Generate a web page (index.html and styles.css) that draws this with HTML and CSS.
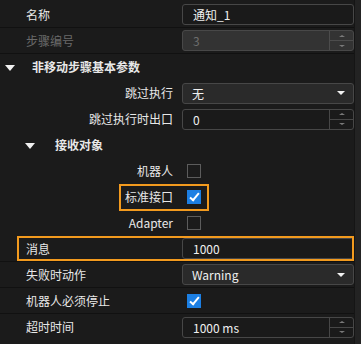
FILE: index.html
```html
<!DOCTYPE html>
<html lang="zh">
<head>
  <meta charset="UTF-8">
  <title>步骤属性</title>
  <link rel="stylesheet" href="styles.css">
</head>
<body>

<div class="panel">
  <div class="rows">

    <div class="row divided">
      <span class="label">名称</span>
      <div class="input">通知_1</div>
    </div>

    <div class="row divided">
      <span class="label disabled">步骤编号</span>
      <div class="spin disabled-box">
        <span class="value">3</span>
        <span class="spin-btns"><i class="up"></i><i class="down"></i></span>
      </div>
    </div>

    <div class="row section">
      <span class="caret"></span>
      <span class="title">非移动步骤基本参数</span>
    </div>

    <div class="row">
      <span class="label right">跳过执行</span>
      <div class="combo"><span class="value">无</span><i class="arrow"></i></div>
    </div>

    <div class="row">
      <span class="label right">跳过执行时出口</span>
      <div class="spin">
        <span class="value">0</span>
        <span class="spin-btns"><i class="up"></i><i class="down"></i></span>
      </div>
    </div>

    <div class="row section sub">
      <span class="caret"></span>
      <span class="title">接收对象</span>
    </div>

    <div class="row">
      <span class="label right">机器人</span>
      <div class="check-cell"><span class="checkbox"></span></div>
    </div>

    <div class="row">
      <span class="label right">标准接口</span>
      <div class="check-cell"><span class="checkbox checked"></span></div>
      <span class="highlight hl-check"></span>
    </div>

    <div class="row">
      <span class="label right">Adapter</span>
      <div class="check-cell"><span class="checkbox"></span></div>
    </div>

    <div class="row divided">
      <span class="label">消息</span>
      <div class="input">1000</div>
      <span class="highlight hl-row"></span>
    </div>

    <div class="row divided">
      <span class="label">失败时动作</span>
      <div class="combo"><span class="value">Warning</span><i class="arrow"></i></div>
    </div>

    <div class="row divided">
      <span class="label">机器人必须停止</span>
      <div class="check-cell"><span class="checkbox checked"></span></div>
    </div>

    <div class="row">
      <span class="label">超时时间</span>
      <div class="spin">
        <span class="value">1000 ms</span>
        <span class="spin-btns"><i class="up"></i><i class="down"></i></span>
      </div>
    </div>

  </div>
  <div class="scrollbar"></div>
</div>

</body>
</html>
```

FILE: styles.css
```css
body {
  margin: 0;
  padding: 0;
  background-color: #1b1b1b;
  font-family: "Noto Sans CJK SC", "Noto Sans", sans-serif;
  font-size: 12px;
  color: #e8e8e8;
}

.panel {
  display: flex;
  width: 361px;
  height: 344px;
  overflow: hidden;
}

.rows {
  width: 355px;
  padding-top: 2px;
}

.scrollbar {
  width: 6px;
  background-color: #232323;
  border-left: 1px solid #151515;
}

.row {
  position: relative;
  display: grid;
  grid-template-columns: 173px 172px;
  column-gap: 9px;
  align-items: center;
  height: 26px;
  box-sizing: border-box;
}

.row.divided {
  border-bottom: 1px solid #111;
}

.label {
  padding-left: 26px;
  white-space: nowrap;
  line-height: 16px;
}

.label.right {
  padding-left: 0;
  text-align: right;
}

.label.disabled {
  color: #6a6a6a;
}

/* section headers */
.row.section {
  display: flex;
  align-items: center;
  padding-left: 5px;
}

.row.section.sub {
  padding-left: 25px;
}

.caret {
  width: 0;
  height: 0;
  border-left: 5px solid transparent;
  border-right: 5px solid transparent;
  border-top: 6px solid #f0f0f0;
  margin-top: 1px;
}

.title {
  margin-left: 8px;
  line-height: 16px;
  font-weight: bold;
}

.row.section.sub .title {
  margin-left: 11px;
}

/* fields */
.input,
.combo,
.spin {
  display: flex;
  align-items: center;
  height: 21px;
  box-sizing: border-box;
  border: 1px solid #474747;
  border-radius: 3px;
  background-color: #1a1a1a;
  color: #f0f0f0;
  padding-left: 10px;
}

.combo {
  justify-content: space-between;
  background-color: #2a2a2a;
  padding-left: 9px;
  padding-right: 8px;
}

.arrow {
  width: 0;
  height: 0;
  border-left: 4px solid transparent;
  border-right: 4px solid transparent;
  border-top: 4px solid #f2f2f2;
}

.spin {
  justify-content: space-between;
  padding-right: 0;
}

.spin-btns {
  display: flex;
  flex-direction: column;
  width: 23px;
  height: 100%;
  border-left: 1px solid #474747;
}

.spin-btns i {
  flex: 1;
  display: flex;
  align-items: center;
  justify-content: center;
}

.spin-btns .up {
  border-bottom: 1px solid #474747;
}

.spin-btns .up::after,
.spin-btns .down::after {
  content: "";
  width: 0;
  height: 0;
  border-left: 3px solid transparent;
  border-right: 3px solid transparent;
}

.spin-btns .up::after {
  border-bottom: 2px solid #7a7a7a;
}

.spin-btns .down::after {
  border-top: 2px solid #7a7a7a;
}

.disabled-box {
  background-color: #333;
  border-color: #484848;
  color: #6e6e6e;
}

.disabled-box .spin-btns,
.disabled-box .spin-btns .up {
  border-color: #4c4c4c;
}

/* checkboxes */
.check-cell {
  padding-left: 5px;
  display: flex;
}

.checkbox {
  width: 14px;
  height: 14px;
  box-sizing: border-box;
  border: 1px solid #5c5c5c;
}

.checkbox.checked {
  border: none;
  background-color: #1c7fe3;
  position: relative;
}

.checkbox.checked::after {
  content: "";
  position: absolute;
  left: 5px;
  top: 1px;
  width: 3px;
  height: 8px;
  border-right: 2px solid #fff;
  border-bottom: 2px solid #fff;
  transform: rotate(40deg);
}

/* orange highlight frames */
.highlight {
  position: absolute;
  border: 2px solid #f29a1e;
  box-sizing: border-box;
  pointer-events: none;
}

.hl-check {
  left: 119px;
  top: 0;
  width: 90px;
  height: 27px;
}

.hl-row {
  left: 17px;
  top: 0;
  width: 337px;
  height: 25px;
}
```
